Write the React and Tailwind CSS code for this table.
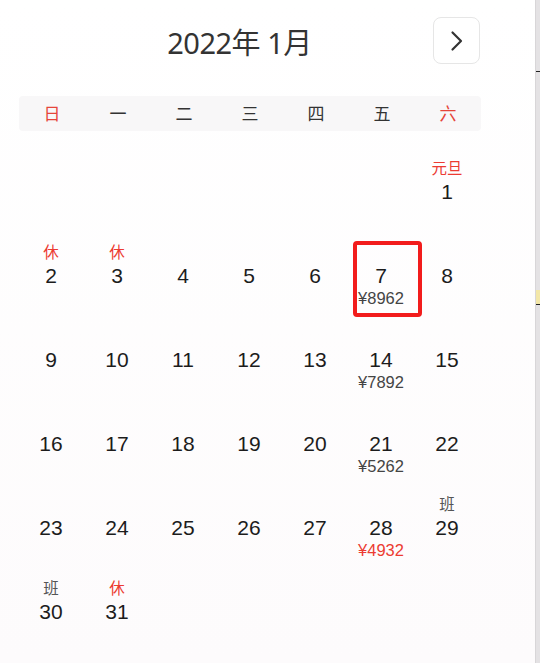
import React from "react";

const weekdays = ["日", "一", "二", "三", "四", "五", "六"];

// tag: holiday label above the day, price: fare below
const days = [
  null, null, null, null, null, null,
  { d: 1, tag: "元旦", tagColor: "red" },
  { d: 2, tag: "休", tagColor: "red" },
  { d: 3, tag: "休", tagColor: "red" },
  { d: 4 },
  { d: 5 },
  { d: 6 },
  { d: 7, price: "¥8962", selected: true },
  { d: 8 },
  { d: 9 }, { d: 10 }, { d: 11 }, { d: 12 }, { d: 13 },
  { d: 14, price: "¥7892" },
  { d: 15 },
  { d: 16 }, { d: 17 }, { d: 18 }, { d: 19 }, { d: 20 },
  { d: 21, price: "¥5262" },
  { d: 22 },
  { d: 23 }, { d: 24 }, { d: 25 }, { d: 26 }, { d: 27 },
  { d: 28, price: "¥4932", priceRed: true },
  { d: 29, tag: "班", tagColor: "gray" },
  { d: 30, tag: "班", tagColor: "gray" },
  { d: 31, tag: "休", tagColor: "red" },
];

const digitFont = { fontFamily: '"Liberation Sans", "Noto Sans", sans-serif' };

function DayCell({ day }) {
  if (!day) return <div className="h-[84px]" />;
  return (
    <div className="relative h-[84px] flex flex-col items-center pt-[4px]">
      {day.selected && (
        <div className="absolute left-[5px] top-[4px] w-[69px] h-[76px] border-[4px] border-[#f21c1c] rounded-[4px]" />
      )}
      <div
        className={
          "h-[22px] leading-[22px] text-[15.5px] " +
          (day.tagColor === "red" ? "text-[#ec3b32]" : "text-[#555]")
        }
      >
        {day.tag || ""}
      </div>
      <div className="mt-[1px] h-[23px] leading-[23px] text-[21px] text-[#1c1c1c]" style={digitFont}>
        {day.d}
      </div>
      <div
        className={
          "h-[22px] leading-[22px] text-[16.5px] " +
          (day.priceRed ? "text-[#ec3b32]" : "text-[#444]")
        }
        style={digitFont}
      >
        {day.price || ""}
      </div>
    </div>
  );
}

export default function App() {
  return (
    <div
      className="w-[540px] h-[663px] flex bg-white overflow-hidden"
      style={{ fontFamily: '"Noto Sans", "Noto Sans CJK SC", sans-serif' }}
    >
      <div className="w-[535px] h-full bg-gradient-to-b from-white to-[#fdfbfc]">
        {/* header */}
        <div className="relative h-[88px] flex items-start justify-center pt-[22px]">
          <div className="text-[29px] leading-[42px] text-[#333] tracking-[-0.5px] mr-[56px]">2022年 1月</div>
          <button className="absolute left-[433px] top-[17px] w-[47px] h-[47px] rounded-[8px] border border-[#e6e6e6] bg-white flex items-center justify-center text-[#333]">
            <svg width="14" height="22" viewBox="0 0 14 22" fill="none">
              <path d="M2.5 2.5 L11 11 L2.5 19.5" stroke="#333" strokeWidth="2.2" strokeLinecap="round" strokeLinejoin="round" />
            </svg>
          </button>
        </div>
        {/* weekdays */}
        <div className="ml-[19px] mt-[8px] w-[462px] h-[35px] bg-[#f8f7f8] rounded-[4px] grid grid-cols-7 items-center">
          {weekdays.map((w, i) => (
            <div
              key={w}
              className={
                "text-center text-[17px] " +
                (i === 0 || i === 6 ? "text-[#e6453a]" : "text-[#333]")
              }
            >
              {w}
            </div>
          ))}
        </div>
        {/* days */}
        <div className="ml-[18px] mt-[22px] w-[462px] grid grid-cols-7">
          {days.map((day, i) => (
            <DayCell key={i} day={day} />
          ))}
        </div>
      </div>
      <div className="w-[5px] h-full bg-[#e4e2e4] border-l border-[#d8d6d8] relative">
        <div className="absolute left-0 top-[71px] w-full h-[1px] bg-[#222]" />
        <div className="absolute left-0 top-[290px] w-full h-[14px] bg-[#f3e7a8]" />
        <div className="absolute left-0 top-[304px] w-full h-[1px] bg-[#222]" />
      </div>
    </div>
  );
}
